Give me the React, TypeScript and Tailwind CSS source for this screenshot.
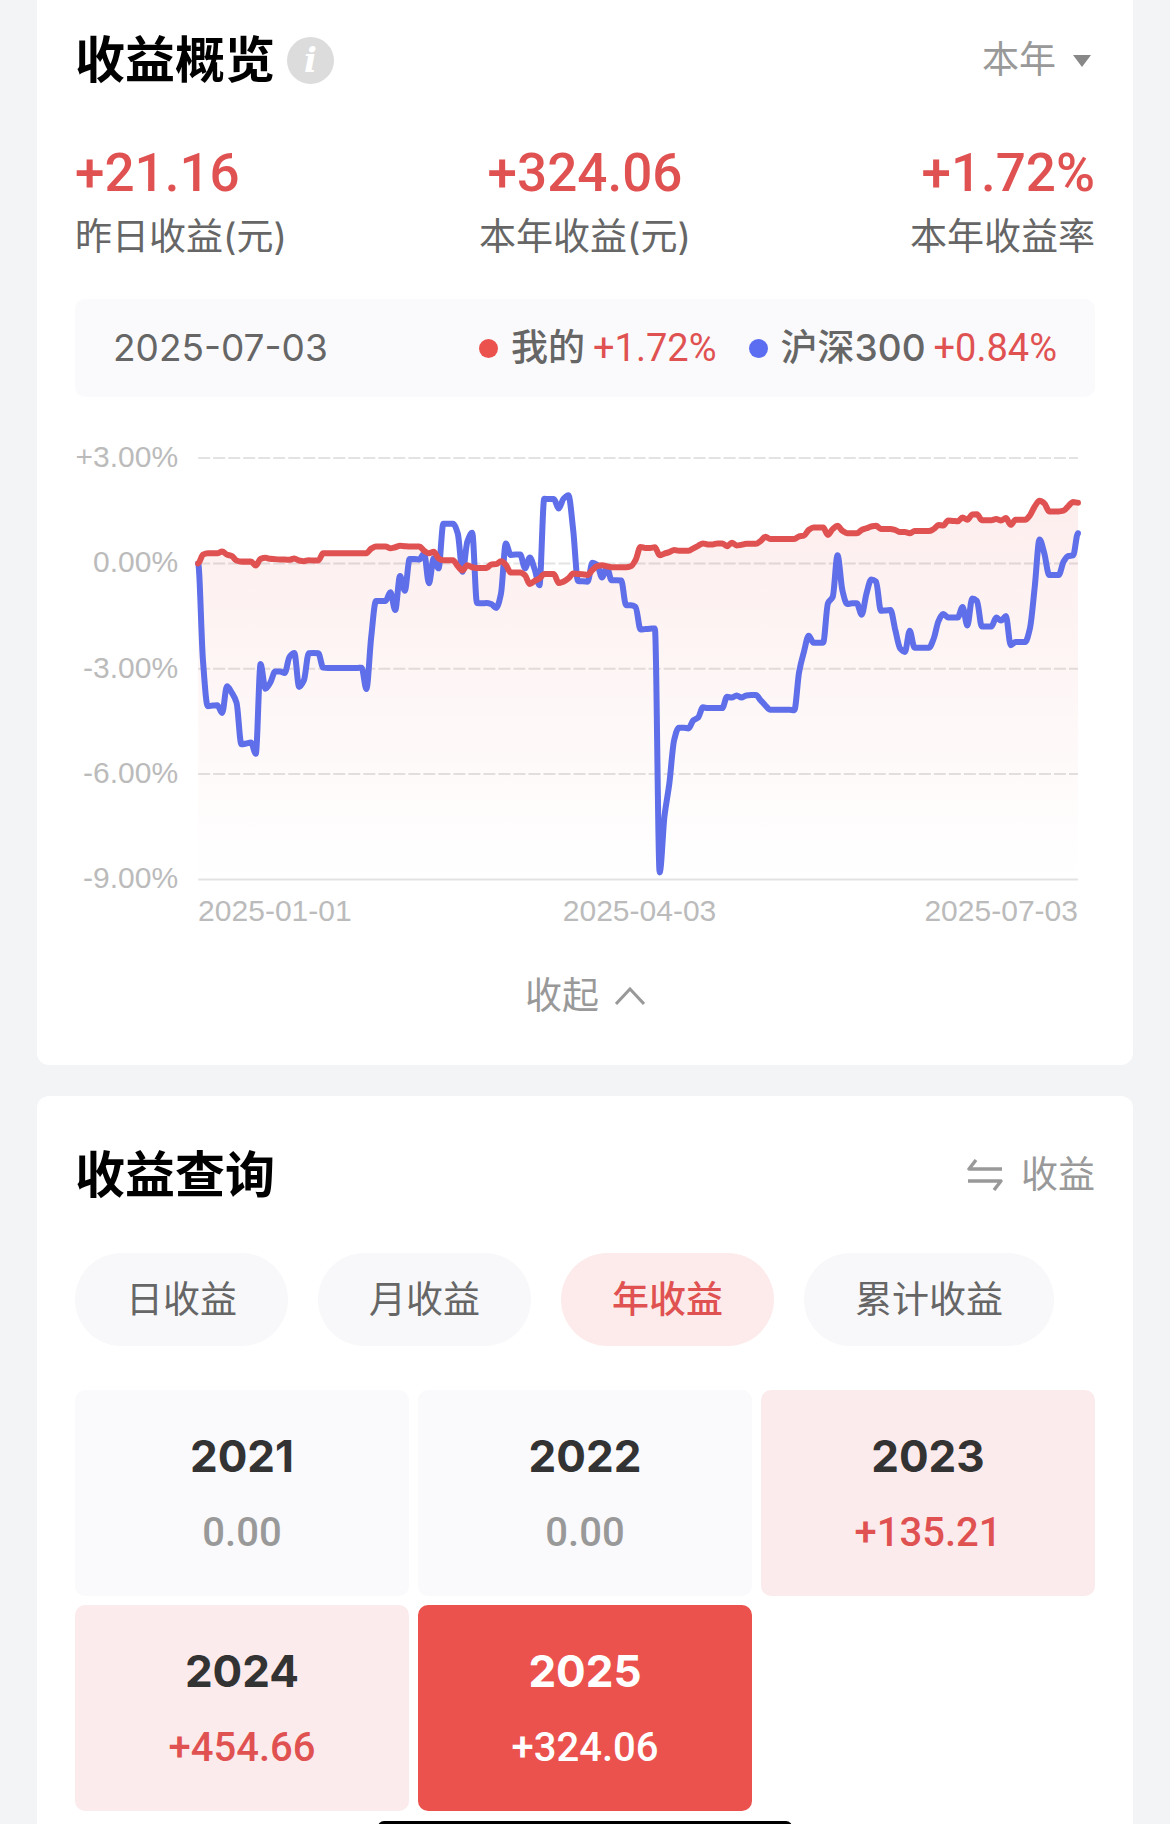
import { useState } from 'react'
import clsx from 'clsx'

// one value per day, 2025-01-01 .. 2025-07-03, in percent
const MINE = [
  0, 0.25, 0.29, 0.29, 0.29, 0.34, 0.25, 0.21, 0.08, 0.05, 0.05, 0.05, -0.06, 0.13, 0.16, 0.13, 0.12, 0.11, 0.11, 0.1,
  0.14, 0.08, 0.06, 0.09, 0.08, 0.08, 0.29, 0.29, 0.29, 0.29, 0.29, 0.29, 0.29, 0.29, 0.29, 0.29, 0.42, 0.48, 0.48, 0.48,
  0.43, 0.46, 0.5, 0.49, 0.48, 0.48, 0.48, 0.36, 0.29, 0.33, 0.14, 0.09, 0.09, 0.09, -0.08, -0.2, -0.05, -0.11, -0.13, -0.13,
  -0.13, -0.03, -0.02, 0.06, -0.04, -0.26, -0.26, -0.26, -0.34, -0.59, -0.5, -0.43, -0.3, -0.3, -0.3, -0.56, -0.52, -0.43, -0.29, -0.3,
  -0.31, -0.33, -0.19, -0.08, -0.05, -0.08, -0.11, -0.11, -0.11, -0.11, -0.08, 0.1, 0.47, 0.44, 0.44, 0.46, 0.23, 0.28, 0.32, 0.38,
  0.36, 0.36, 0.36, 0.43, 0.5, 0.57, 0.54, 0.54, 0.57, 0.57, 0.49, 0.59, 0.51, 0.53, 0.56, 0.56, 0.56, 0.64, 0.76, 0.69,
  0.69, 0.69, 0.69, 0.69, 0.69, 0.77, 0.79, 0.95, 1.02, 1.02, 1.02, 0.81, 0.98, 1.07, 0.93, 0.86, 0.86, 0.86, 0.95, 1,
  1.05, 1.07, 0.98, 0.98, 0.98, 0.95, 0.89, 0.89, 0.86, 0.92, 0.92, 0.92, 0.92, 0.98, 1.09, 1.08, 1.22, 1.21, 1.2, 1.31,
  1.24, 1.39, 1.4, 1.23, 1.23, 1.23, 1.26, 1.22, 1.29, 1.1, 1.24, 1.24, 1.24, 1.37, 1.62, 1.78, 1.71, 1.48, 1.48, 1.48,
  1.5, 1.63, 1.75, 1.73,
]

const CSI300 = [
  0, -2.75, -4.07, -4.05, -4.04, -4.26, -3.5, -3.68, -3.97, -5.15, -5.13, -5.1, -5.42, -2.87, -3.57, -3.4, -3.08, -3.08, -3.12, -2.66,
  -2.55, -3.52, -3.33, -2.56, -2.55, -2.56, -2.97, -2.98, -2.98, -2.98, -2.98, -2.98, -2.98, -2.98, -2.97, -3.58, -2.1, -1.07, -1.07, -1.07,
  -0.82, -1.33, -0.36, -0.78, 0.12, 0.12, 0.11, 0.28, -0.57, 0.15, -0.14, 1.13, 1.13, 1.13, 0.85, -0.24, 0.62, 0.87, -1.13, -1.14,
  -1.13, -1.16, -1.27, -0.85, 0.57, 0.24, 0.25, 0.25, -0.14, 0.17, -0.17, -0.62, 1.84, 1.83, 1.83, 1.56, 1.84, 1.94, 0.95, -0.5,
  -0.51, -0.52, 0.02, -0.04, -0.4, -0.11, -0.48, -0.48, -0.49, -1.19, -1.19, -1.24, -1.88, -1.87, -1.86, -1.85, -8.8, -7.2, -6.28, -5.04,
  -4.68, -4.68, -4.7, -4.47, -4.39, -4.1, -4.12, -4.12, -4.12, -4.12, -3.8, -3.82, -3.76, -3.82, -3.76, -3.75, -3.75, -3.9, -4.05, -4.17,
  -4.17, -4.17, -4.17, -4.17, -4.18, -3.09, -2.52, -2.06, -2.26, -2.26, -2.26, -1.14, -0.95, 0.23, -0.76, -1.16, -1.14, -1.14, -1.46, -0.86,
  -0.46, -0.52, -1.35, -1.34, -1.33, -1.9, -2.42, -2.52, -1.92, -2.4, -2.4, -2.4, -2.4, -2.14, -1.64, -1.44, -1.54, -1.54, -1.54, -1.24,
  -1.77, -1, -1.07, -1.8, -1.8, -1.8, -1.54, -1.63, -1.5, -2.33, -2.24, -2.24, -2.24, -1.85, -0.67, 0.68, 0.28, -0.33, -0.33, -0.33,
  0.05, 0.21, 0.23, 0.86,
]

const PLOT = { left: 123, right: 1002, top: 28, bottom: 449 }
const TICKS = [3, 0, -3, -6, -9]

const toY = (v: number) => PLOT.top + ((3 - v) / 12) * (PLOT.bottom - PLOT.top)

// monotone cubic interpolation, equal x steps
function linePath(values: number[]) {
  const step = (PLOT.right - PLOT.left) / (values.length - 1)
  const ys = values.map(toY)
  const slopes = ys.map((y, i) => {
    if (i === 0 || i === ys.length - 1) return 0
    const a = y - ys[i - 1]
    const b = ys[i + 1] - y
    return a * b <= 0 ? 0 : (2 * a * b) / (a + b)
  })
  let d = `M${PLOT.left},${ys[0].toFixed(1)}`
  for (let i = 1; i < ys.length; i++) {
    const x0 = PLOT.left + (i - 1) * step
    const x1 = x0 + step
    d += `C${(x0 + step / 3).toFixed(1)},${(ys[i - 1] + slopes[i - 1] / 3).toFixed(1)}`
    d += ` ${(x1 - step / 3).toFixed(1)},${(ys[i] - slopes[i] / 3).toFixed(1)}`
    d += ` ${x1.toFixed(1)},${ys[i].toFixed(1)}`
  }
  return d
}

function formatTick(v: number) {
  return `${v > 0 ? '+' : ''}${v.toFixed(2)}%`
}

function ProfitChart() {
  const mine = linePath(MINE)

  return (
    <svg
      viewBox="0 0 1019 500"
      className="mt-[33px] block h-auto w-full font-['Liberation_Sans',sans-serif]"
      role="img"
      aria-label="收益率走势"
    >
      <defs>
        <linearGradient id="mine-fill" x1="0" y1="0" x2="0" y2="1">
          <stop offset="0" stopColor="#eb524e" stopOpacity="0.1" />
          <stop offset="0.4" stopColor="#eb524e" stopOpacity="0.06" />
          <stop offset="1" stopColor="#eb524e" stopOpacity="0" />
        </linearGradient>
      </defs>
      <path d={`${mine}V${PLOT.bottom}H${PLOT.left}Z`} fill="url(#mine-fill)" />
      {TICKS.map((t) => (
        <g key={t}>
          <line
            x1={PLOT.left}
            x2={PLOT.right}
            y1={toY(t)}
            y2={toY(t)}
            stroke="#000"
            strokeOpacity="0.11"
            strokeWidth="2"
            strokeDasharray={t === -9 ? undefined : '12 3'}
          />
          <text x="103" y={toY(t) + 9} textAnchor="end" fontSize="30" fill="#bbb">
            {formatTick(t)}
          </text>
        </g>
      ))}
      <g fill="none" strokeWidth="6" strokeLinecap="round" strokeLinejoin="round">
        <path d={linePath(CSI300)} stroke="#5f6ee9" />
        <path d={mine} stroke="#e05252" />
      </g>
      <g fontSize="30" fill="#bbb">
        <text x={PLOT.left} y="491">2025-01-01</text>
        <text x="564" y="491" textAnchor="middle">2025-04-03</text>
        <text x={PLOT.right} y="491" textAnchor="end">2025-07-03</text>
      </g>
    </svg>
  )
}

const METRICS = [
  { label: '昨日收益(元)', value: '+21.16', align: 'items-start' },
  { label: '本年收益(元)', value: '+324.06', align: 'items-center' },
  { label: '本年收益率', value: '+1.72%', align: 'items-end' },
]

interface LegendItemProps {
  name: string
  value: string
  dot: string
}

function LegendItem({ name, value, dot }: LegendItemProps) {
  return (
    <div className="flex items-center">
      <span className={clsx('size-[19px] rounded-full', dot)} />
      <span className="ml-[13px] font-medium text-[#666]">{name}</span>
      <span className="ml-2 font-['Roboto',sans-serif] text-[38px] text-[#e05252]">{value}</span>
    </div>
  )
}

function Overview() {
  return (
    <section className="rounded-b-xl bg-white px-[38px] pt-[30px] pb-11">
      <div className="flex items-center justify-between">
        <div className="flex items-center gap-3">
          <h2 className="text-[50px] leading-[60px] font-bold text-black">收益概览</h2>
          <button
            type="button"
            aria-label="说明"
            className="flex size-[47px] items-center justify-center rounded-full bg-[#dcdcdc] font-['DejaVu_Serif',serif] text-[34px] leading-none font-bold text-white italic"
          >
            i
          </button>
        </div>
        <div className="relative">
          <select
            aria-label="时间范围"
            className="appearance-none bg-transparent pr-[39px] text-[37px] leading-[50px] text-[#999]"
          >
            <option>本年</option>
            <option>本月</option>
          </select>
          <svg viewBox="0 0 18 12" className="pointer-events-none absolute top-5 right-1 h-3 w-[18px]" aria-hidden="true">
            <path d="M0 0h18L9 12z" fill="#888" />
          </svg>
        </div>
      </div>

      <div className="mt-[53px] grid grid-cols-3">
        {METRICS.map((m) => (
          <div key={m.label} className={clsx('flex flex-col gap-[9px]', m.align)}>
            <span className="font-['Roboto',sans-serif] text-[53px] leading-[60px] font-medium text-[#e05252]">
              {m.value}
            </span>
            <span className="text-[37px] leading-[50px] text-[#666]">{m.label}</span>
          </div>
        ))}
      </div>

      <div className="mt-[37px] flex h-[98px] items-center justify-between rounded-[10px] bg-[#fafafc] px-[38px] text-[37px] leading-[50px]">
        <span className="text-[#666]">2025-07-03</span>
        <div className="flex gap-8">
          <LegendItem name="我的" value="+1.72%" dot="bg-[#eb524e]" />
          <LegendItem name="沪深300" value="+0.84%" dot="bg-[#5b6df0]" />
        </div>
      </div>

      <ProfitChart />

      <button
        type="button"
        className="mx-auto mt-[41px] flex items-center gap-4 text-[37px] leading-[50px] text-[#999]"
      >
        收起
        <svg viewBox="0 0 30 18" className="h-[18px] w-[30px]" fill="none" stroke="#999" strokeWidth="3" aria-hidden="true">
          <path d="M1 17 15 2l14 15" />
        </svg>
      </button>
    </section>
  )
}

const TABS = ['日收益', '月收益', '年收益', '累计收益']

const YEARS = [
  { year: 2021, profit: 0 },
  { year: 2022, profit: 0 },
  { year: 2023, profit: 135.21 },
  { year: 2024, profit: 454.66 },
  { year: 2025, profit: 324.06 },
]

function YearCell({ year, profit, selected }: { year: number; profit: number; selected: boolean }) {
  return (
    <button
      type="button"
      className={clsx(
        'flex flex-col items-center gap-[27px] rounded-[10px] pt-[41px] pb-[38px] leading-[50px]',
        selected ? 'bg-[#eb524e] text-white' : profit > 0 ? 'bg-[#fcebed] text-[#333]' : 'bg-[#fafafc] text-[#333]',
      )}
    >
      <span className="text-[44px] font-bold">{year}</span>
      <span
        className={clsx(
          "font-['Roboto',sans-serif] text-[40px] font-medium",
          selected ? 'text-white' : profit > 0 ? 'text-[#e05252]' : 'text-[#999]',
        )}
      >
        {profit > 0 ? '+' : ''}{profit.toFixed(2)}
      </span>
    </button>
  )
}

function ProfitQuery() {
  const [tab, setTab] = useState('年收益')

  return (
    <section className="grow rounded-t-xl bg-white px-[38px] pt-[49px] pb-[13px]">
      <div className="flex items-center justify-between">
        <h2 className="text-[50px] leading-[60px] font-bold text-black">收益查询</h2>
        <button type="button" className="flex items-center gap-[18px] text-[37px] leading-[50px] text-[#999]">
          <svg viewBox="0 0 36 32" className="h-8 w-9" fill="none" stroke="#999" strokeWidth="3.4" strokeLinejoin="round" aria-hidden="true">
            <path d="M9 1 2 10h33M1 22h33l-7 9" />
          </svg>
          收益
        </button>
      </div>

      <div className="mt-12 flex gap-[30px]">
        {TABS.map((t) => (
          <button
            key={t}
            type="button"
            aria-pressed={t === tab}
            onClick={() => setTab(t)}
            className={clsx(
              'h-[93px] rounded-full px-[51px] text-[37px] leading-[50px]',
              t === tab ? 'bg-[#fdebeb] font-medium text-[#e05252]' : 'bg-[#f8f8fa] text-[#666]',
            )}
          >
            {t}
          </button>
        ))}
      </div>

      <div className="mt-11 grid grid-cols-3 gap-[9px]">
        {YEARS.map((y) => (
          <YearCell key={y.year} year={y.year} profit={y.profit} selected={y.year === 2025} />
        ))}
      </div>
    </section>
  )
}

export default function App() {
  return (
    <div className="flex min-h-screen flex-col gap-[31px] bg-[#f3f4f6] px-[37px] font-['Inter','Noto_Sans_CJK_SC',sans-serif]">
      <Overview />
      <ProfitQuery />
      <div className="fixed -bottom-[10px] left-1/2 h-[13px] w-[415px] -translate-x-1/2 rounded-full bg-black" />
    </div>
  )
}
